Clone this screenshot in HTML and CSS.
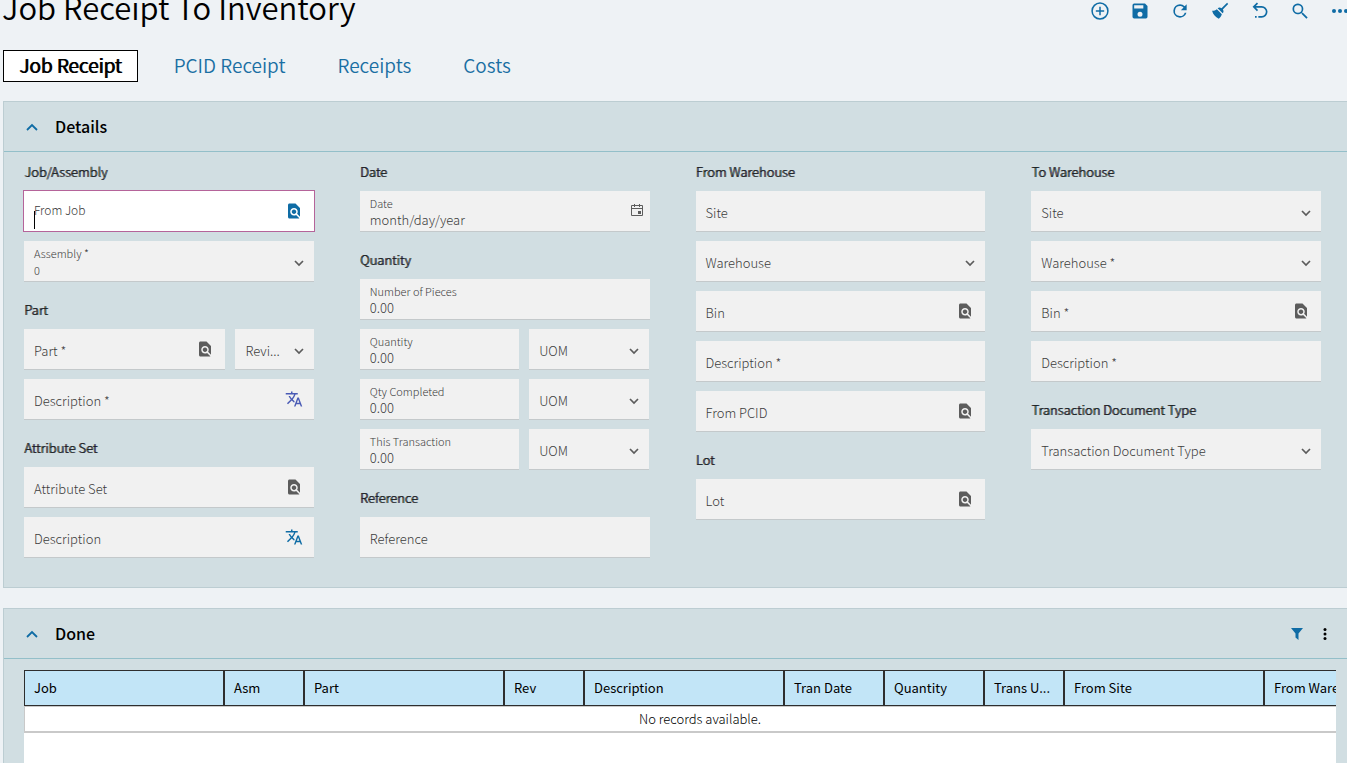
FILE: index.html
```
<!DOCTYPE html>
<html lang="en">
<head>
    <meta charset="UTF-8">
    <meta name="viewport" content="width=device-width, initial-scale=1.0">
    <title>Job Receipt To Inventory</title>
    <link rel="stylesheet" href="styles.css">
</head>
<body>

<!-- icon sprite -->
<svg class="sprite" aria-hidden="true">
    <symbol id="i-add" viewBox="0 0 24 24"><circle cx="12" cy="12" r="9.5" fill="none" stroke="currentColor" stroke-width="1.8"/><path d="M12 7v10M7 12h10" stroke="currentColor" stroke-width="1.8"/></symbol>
    <symbol id="i-save" viewBox="0 0 24 24"><path d="M18 3H5a2 2 0 0 0-2 2v14a2 2 0 0 0 2 2h14a2 2 0 0 0 2-2V6l-3-3zm-6 16a3 3 0 1 1 0-6 3 3 0 0 1 0 6zm4-10H5V5h11v4z"/></symbol>
    <symbol id="i-refresh" viewBox="0 0 24 24"><path d="M17.65 6.35A7.95 7.95 0 0 0 12 4a8 8 0 1 0 7.73 10h-2.08A6 6 0 1 1 12 6c1.66 0 3.14.69 4.22 1.78L13 11h7V4l-2.35 2.35z"/></symbol>
    <symbol id="i-brush" viewBox="0 0 24 24"><path d="M20.5 2.2l1.3 1.3-6.4 6.7c1.2 1.7 1 3.4-.2 4.6l-6-6c1.2-1.2 2.9-1.4 4.6-.2l6.7-6.4zM8.2 9.8l6 6c-.6 2-1.8 3.8-3.7 5.4C6.5 19.5 3.8 16.5 2.5 11.8c1.8.2 3.8-.4 5.7-2z"/></symbol>
    <symbol id="i-undo" viewBox="0 0 24 24"><path d="M9 2.5L4.5 7 9 11.5M5 7h9a6 6 0 0 1 0 12h-4M8 19H6" fill="none" stroke="currentColor" stroke-width="2"/></symbol>
    <symbol id="i-search" viewBox="0 0 24 24"><path d="M15.5 14h-.79l-.28-.27A6.5 6.5 0 1 0 13.73 14.43l.27.28v.79l5.7 5.7 1.5-1.5L15.5 14zm-6 0a4.5 4.5 0 1 1 0-9 4.5 4.5 0 0 1 0 9z"/></symbol>
    <symbol id="i-more" viewBox="0 0 24 24"><circle cx="6" cy="12" r="2"/><circle cx="12" cy="12" r="2"/><circle cx="18" cy="12" r="2"/></symbol>
    <symbol id="i-kebab" viewBox="0 0 12 12"><circle cx="6" cy="1.5" r="1.5"/><circle cx="6" cy="6" r="1.5"/><circle cx="6" cy="10.5" r="1.5"/></symbol>
    <symbol id="i-up" viewBox="0 0 12 12"><path d="M1 9l5-5 5 5" fill="none" stroke="currentColor" stroke-width="1.8"/></symbol>
    <symbol id="i-down" viewBox="0 0 12 12"><path d="M2 4l4 4 4-4" fill="none" stroke="currentColor" stroke-width="1.7"/></symbol>
    <symbol id="i-filter" viewBox="0 0 12 12"><path d="M0 0h12L7.5 5.5V12l-3-2.5v-4z"/></symbol>
    <symbol id="i-find" viewBox="0 0 24 24"><path d="M20 19.59V8l-6-6H6c-1.1 0-1.99.9-1.99 2L4 20c0 1.1.89 2 1.99 2H18c.45 0 .85-.15 1.19-.4l-4.43-4.43c-.8.52-1.74.83-2.76.83-2.76 0-5-2.24-5-5s2.24-5 5-5 5 2.24 5 5c0 1.02-.31 1.96-.83 2.75L20 19.59zM9 13c0 1.66 1.34 3 3 3s3-1.34 3-3-1.34-3-3-3-3 1.34-3 3z"/></symbol>
    <symbol id="i-translate" viewBox="0 0 24 24"><path d="M12.87 15.07l-2.54-2.51.03-.03c1.74-1.94 2.98-4.17 3.71-6.53H17V4h-7V2H8v2H1v1.99h11.17C11.5 7.92 10.44 9.75 9 11.35 8.07 10.32 7.3 9.19 6.69 8h-2c.73 1.63 1.73 3.17 2.98 4.56l-5.09 5.02L4 19l5-5 3.11 3.11.76-2.04zM18.5 10h-2L12 22h2l1.12-3h4.75L21 22h2l-4.5-12zm-2.62 7l1.62-4.33L19.12 17h-3.24z"/></symbol>
    <symbol id="i-calendar" viewBox="0 0 12 12"><path d="M.5 1.5h11v10H.5zM.5 4.5h11M3.5 0v3M8.5 0v3" fill="none" stroke="currentColor"/><path d="M7 7h3v3H7z"/></symbol>
</svg>

<header class="page-header">
    <h1>Job Receipt To Inventory</h1>
    <div class="toolbar">
        <button aria-label="New"><svg><use href="#i-add"/></svg></button>
        <button aria-label="Save"><svg><use href="#i-save"/></svg></button>
        <button aria-label="Refresh"><svg><use href="#i-refresh"/></svg></button>
        <button aria-label="Clear"><svg><use href="#i-brush"/></svg></button>
        <button aria-label="Undo"><svg><use href="#i-undo"/></svg></button>
        <button aria-label="Search"><svg><use href="#i-search"/></svg></button>
        <button aria-label="More"><svg class="more"><use href="#i-more"/></svg></button>
    </div>
</header>

<nav class="tabs">
    <a href="#" class="active">Job Receipt</a>
    <a href="#">PCID Receipt</a>
    <a href="#">Receipts</a>
    <a href="#">Costs</a>
</nav>

<section class="panel">
    <div class="panel-header">
        <button class="toggle" aria-label="Collapse Details"><svg><use href="#i-up"/></svg></button>
        <h2>Details</h2>
    </div>
    <form class="columns">
        <div class="column">
            <div class="group">
                <h3>Job/Assembly</h3>
                <div class="field focused">
                    <input type="text" id="from-job">
                    <label for="from-job">From Job</label>
                    <span class="caret"></span>
                    <button type="button" class="icon blue" aria-label="Find job"><svg><use href="#i-find"/></svg></button>
                </div>
                <div class="field filled small">
                    <select id="assembly"><option>0</option></select>
                    <label for="assembly">Assembly *</label>
                    <svg class="arrow"><use href="#i-down"/></svg>
                </div>
            </div>
            <div class="group">
                <h3>Part</h3>
                <div class="row part-row">
                    <div class="field">
                        <input type="text" id="part">
                        <label for="part">Part *</label>
                        <button type="button" class="icon" aria-label="Find part"><svg><use href="#i-find"/></svg></button>
                    </div>
                    <div class="field">
                        <select id="revision"><option></option></select>
                        <label for="revision">Revi...</label>
                        <svg class="arrow"><use href="#i-down"/></svg>
                    </div>
                </div>
                <div class="field">
                    <input type="text" id="part-desc">
                    <label for="part-desc">Description *</label>
                    <button type="button" class="icon indigo" aria-label="Translate"><svg><use href="#i-translate"/></svg></button>
                </div>
            </div>
            <div class="group">
                <h3>Attribute Set</h3>
                <div class="field">
                    <input type="text" id="attr-set">
                    <label for="attr-set">Attribute Set</label>
                    <button type="button" class="icon" aria-label="Find attribute set"><svg><use href="#i-find"/></svg></button>
                </div>
                <div class="field">
                    <input type="text" id="attr-desc">
                    <label for="attr-desc">Description</label>
                    <button type="button" class="icon blue" aria-label="Translate"><svg><use href="#i-translate"/></svg></button>
                </div>
            </div>
        </div>

        <div class="column">
            <div class="group">
                <h3>Date</h3>
                <div class="field filled">
                    <input type="text" id="date" value="month/day/year">
                    <label for="date">Date</label>
                    <button type="button" class="icon calendar" aria-label="Pick date"><svg><use href="#i-calendar"/></svg></button>
                </div>
            </div>
            <div class="group">
                <h3>Quantity</h3>
                <div class="field filled">
                    <input type="text" id="pieces" value="0.00">
                    <label for="pieces">Number of Pieces</label>
                </div>
                <div class="row qty-row">
                    <div class="field filled">
                        <input type="text" id="qty" value="0.00">
                        <label for="qty">Quantity</label>
                    </div>
                    <div class="field">
                        <select id="qty-uom"><option></option></select>
                        <label for="qty-uom">UOM</label>
                        <svg class="arrow"><use href="#i-down"/></svg>
                    </div>
                </div>
                <div class="row qty-row">
                    <div class="field filled">
                        <input type="text" id="completed" value="0.00">
                        <label for="completed">Qty Completed</label>
                    </div>
                    <div class="field">
                        <select id="completed-uom"><option></option></select>
                        <label for="completed-uom">UOM</label>
                        <svg class="arrow"><use href="#i-down"/></svg>
                    </div>
                </div>
                <div class="row qty-row">
                    <div class="field filled">
                        <input type="text" id="transaction" value="0.00">
                        <label for="transaction">This Transaction</label>
                    </div>
                    <div class="field">
                        <select id="transaction-uom"><option></option></select>
                        <label for="transaction-uom">UOM</label>
                        <svg class="arrow"><use href="#i-down"/></svg>
                    </div>
                </div>
            </div>
            <div class="group">
                <h3>Reference</h3>
                <div class="field">
                    <input type="text" id="reference">
                    <label for="reference">Reference</label>
                </div>
            </div>
        </div>

        <div class="column">
            <div class="group">
                <h3>From Warehouse</h3>
                <div class="field">
                    <input type="text" id="from-site">
                    <label for="from-site">Site</label>
                </div>
                <div class="field">
                    <select id="from-wh"><option></option></select>
                    <label for="from-wh">Warehouse</label>
                    <svg class="arrow"><use href="#i-down"/></svg>
                </div>
                <div class="field">
                    <input type="text" id="from-bin">
                    <label for="from-bin">Bin</label>
                    <button type="button" class="icon" aria-label="Find bin"><svg><use href="#i-find"/></svg></button>
                </div>
                <div class="field">
                    <input type="text" id="from-desc">
                    <label for="from-desc">Description *</label>
                </div>
                <div class="field">
                    <input type="text" id="from-pcid">
                    <label for="from-pcid">From PCID</label>
                    <button type="button" class="icon" aria-label="Find PCID"><svg><use href="#i-find"/></svg></button>
                </div>
            </div>
            <div class="group">
                <h3>Lot</h3>
                <div class="field">
                    <input type="text" id="lot">
                    <label for="lot">Lot</label>
                    <button type="button" class="icon" aria-label="Find lot"><svg><use href="#i-find"/></svg></button>
                </div>
            </div>
        </div>

        <div class="column">
            <div class="group">
                <h3>To Warehouse</h3>
                <div class="field">
                    <select id="to-site"><option></option></select>
                    <label for="to-site">Site</label>
                    <svg class="arrow"><use href="#i-down"/></svg>
                </div>
                <div class="field">
                    <select id="to-wh"><option></option></select>
                    <label for="to-wh">Warehouse *</label>
                    <svg class="arrow"><use href="#i-down"/></svg>
                </div>
                <div class="field">
                    <input type="text" id="to-bin">
                    <label for="to-bin">Bin *</label>
                    <button type="button" class="icon" aria-label="Find bin"><svg><use href="#i-find"/></svg></button>
                </div>
                <div class="field">
                    <input type="text" id="to-desc">
                    <label for="to-desc">Description *</label>
                </div>
            </div>
            <div class="group">
                <h3>Transaction Document Type</h3>
                <div class="field">
                    <select id="doc-type"><option></option></select>
                    <label for="doc-type">Transaction Document Type</label>
                    <svg class="arrow"><use href="#i-down"/></svg>
                </div>
            </div>
        </div>
    </form>
</section>

<section class="panel done">
    <div class="panel-header">
        <button class="toggle" aria-label="Collapse Done"><svg><use href="#i-up"/></svg></button>
        <h2>Done</h2>
        <div class="panel-actions">
            <button class="filter" aria-label="Filter"><svg><use href="#i-filter"/></svg></button>
            <button class="kebab" aria-label="Options"><svg><use href="#i-kebab"/></svg></button>
        </div>
    </div>
    <div class="grid-wrap">
        <table>
            <colgroup>
                <col class="wide"><col class="narrow"><col class="wide"><col class="narrow"><col class="wide">
                <col class="mid"><col class="mid"><col class="narrow"><col class="wide"><col>
            </colgroup>
            <thead>
                <tr>
                    <th>Job</th>
                    <th>Asm</th>
                    <th>Part</th>
                    <th>Rev</th>
                    <th>Description</th>
                    <th>Tran Date</th>
                    <th>Quantity</th>
                    <th>Trans U...</th>
                    <th>From Site</th>
                    <th>From Warehouse</th>
                </tr>
            </thead>
            <tbody>
                <tr>
                    <td colspan="10">No records available.</td>
                </tr>
            </tbody>
        </table>
    </div>
</section>

</body>
</html>
```
FILE: styles.css
```
* {
    box-sizing: border-box;
}

body {
    margin: 0;
    min-height: 100vh;
    display: flex;
    flex-direction: column;
    overflow: hidden;
    background-color: #eef2f5;
    color: #000;
    font-family: "Noto Sans CJK SC", "Source Sans Pro", "Noto Sans", sans-serif;
    font-size: 13px;
    line-height: 20px;
}

h1, h2, h3 {
    margin: 0;
}

button {
    padding: 0;
    border: none;
    background: none;
    color: inherit;
    cursor: pointer;
}

svg {
    display: block;
    fill: currentColor;
}

.sprite {
    display: none;
}

/* the title is partly scrolled out of view */
.page-header {
    display: flex;
    justify-content: space-between;
    height: 50px;
    padding-left: 2px;
}

.page-header h1 {
    margin-top: -13px;
    font-size: 31px;
    font-weight: 350;
    line-height: 40px;
    white-space: nowrap;
}

.toolbar {
    display: flex;
    height: 21px;
    margin-right: -13px;
    color: #0f6ca5;
}

.toolbar button {
    display: flex;
    align-items: center;
    justify-content: center;
    width: 40px;
}

.toolbar svg {
    width: 20px;
    height: 20px;
}

.toolbar .more {
    width: 24px;
    height: 24px;
}

.tabs {
    display: flex;
    gap: 20px;
    height: 51px;
    padding-left: 3px;
}

.tabs a {
    height: 32px;
    padding: 0 15px;
    border: 1px solid transparent;
    color: #1a6fa3;
    font-size: 19px;
    font-weight: 350;
    line-height: 28px;
    text-decoration: none;
}

.tabs .active {
    border-color: #000;
    background-color: #fff;
    color: #000;
    text-shadow: 1px 0 #000;
}

.panel {
    margin-left: 3px;
    border: 1px solid #bccdd2;
    border-right: none;
    background-color: #d1dee2;
}

.panel-header {
    display: flex;
    align-items: center;
    height: 50px;
    padding: 0 16px 0 22px;
    border-bottom: 1px solid #93bfc9;
}

.panel-header h2 {
    margin-left: 17px;
    padding-bottom: 2px;
    font-size: 16px;
    font-weight: 500;
}

.toggle {
    color: #0f6ca5;
}

.toggle svg {
    width: 12px;
    height: 12px;
}

.columns {
    display: grid;
    grid-template-columns: repeat(4, 1fr);
    gap: 46px;
    padding: 11px 26px 29px 20px;
}

.column {
    display: flex;
    flex-direction: column;
    gap: 19px;
}

.group {
    display: flex;
    flex-direction: column;
    gap: 9px;
}

.group h3 {
    padding-bottom: 2px;
    color: #1c2226;
    font-size: 13px;
    font-weight: 300;
    line-height: 17px;
    text-shadow: 1px 0 #1c2226;
}

.row {
    display: grid;
    gap: 10px;
}

.part-row {
    grid-template-columns: 72fr 28fr;
}

.qty-row {
    grid-template-columns: 57fr 43fr;
}

.field {
    position: relative;
    min-width: 0;
}

.field input, .field select {
    display: block;
    width: 100%;
    height: 41px;
    padding: 17px 10px 0;
    border: none;
    border-bottom: 1px solid #c4c9cb;
    border-radius: 0;
    outline: none;
    appearance: none;
    background-color: #f1f1f1;
    color: #3c3c3c;
    font: inherit;
    font-weight: 300;
}

.field label {
    position: absolute;
    top: 12px;
    left: 10px;
    color: #3c3c3c;
    font-weight: 300;
    white-space: nowrap;
    pointer-events: none;
}

.filled label {
    top: 2px;
    font-size: 11px;
}

.small select {
    font-size: 11px;
}

.focused input {
    border-color: #b5649a;
    background-color: #fff;
    box-shadow: -1px -1px #b5649a, 1px -1px #b5649a, -1px 0 #b5649a, 1px 0 #b5649a;
}

.focused label {
    top: 9px;
    font-size: 12px;
}

.caret {
    position: absolute;
    top: 20px;
    left: 10px;
    width: 1px;
    height: 18px;
    background-color: #000;
}

.icon {
    position: absolute;
    top: 11px;
    right: 11px;
    color: #5c5c5c;
}

.icon svg {
    width: 18px;
    height: 18px;
}

.blue {
    color: #0f6ca5;
}

.indigo {
    color: #4a5bb5;
}

.calendar {
    top: 13px;
    right: 7px;
}

.calendar svg {
    width: 12px;
    height: 12px;
}

.arrow {
    position: absolute;
    top: 16px;
    right: 9px;
    width: 12px;
    height: 12px;
    color: #5c5c5c;
    pointer-events: none;
}

.done {
    flex: 1;
    display: flex;
    flex-direction: column;
    margin-top: 20px;
    border-bottom: none;
}

.panel-actions {
    display: flex;
    align-items: center;
    gap: 16px;
    margin-left: auto;
}

.filter {
    color: #0f6ca5;
}

.filter svg, .kebab svg {
    width: 12px;
    height: 12px;
}

.grid-wrap {
    flex: 1;
    margin: 11px 11px 0 20px;
    overflow: hidden;
    background-color: #fff;
}

table {
    width: 1352px;
    border-collapse: separate;
    border-spacing: 0;
    table-layout: fixed;
}

.wide {
    width: 200px;
}

.mid {
    width: 100px;
}

.narrow {
    width: 80px;
}

th {
    height: 36px;
    padding: 0 9px;
    border: 1px solid #2e2e2e;
    background-color: #c2e5f7;
    font-size: 13px;
    font-weight: 400;
    text-align: left;
    white-space: nowrap;
}

td {
    height: 27px;
    padding: 0;
    border: 1px solid #c9c9c9;
    border-bottom-width: 2px;
    font-size: 13px;
    font-weight: 300;
    text-align: center;
}
```
